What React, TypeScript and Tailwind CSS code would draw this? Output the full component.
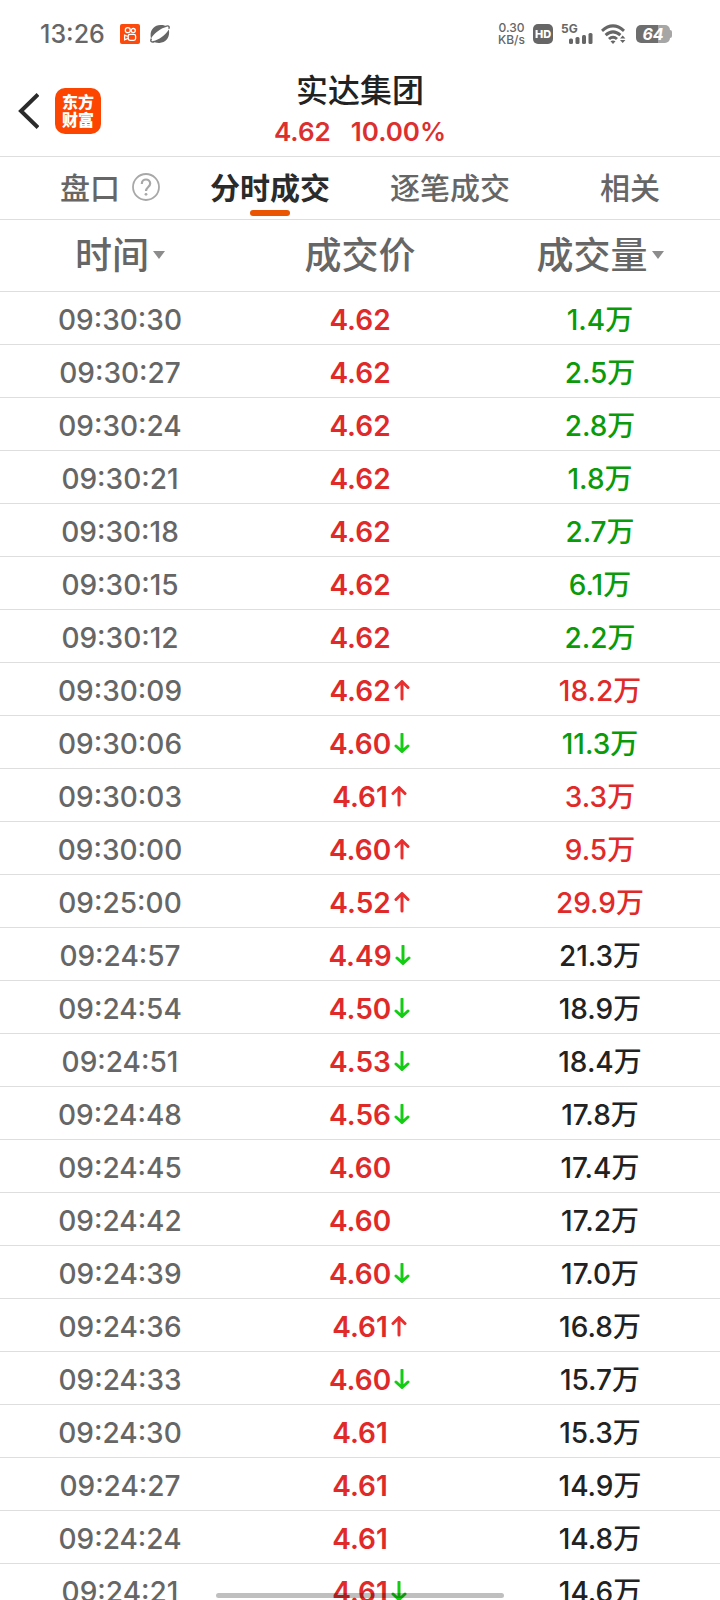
import React, { useState } from 'react';

type Tone = 'up' | 'down' | 'flat';

interface Trade {
  time: string;
  price: string;
  move?: 'up' | 'down';
  volume: string;
  tone: Tone;
}

const trades: Trade[] = [
  { time: '09:30:30', price: '4.62', volume: '1.4万', tone: 'down' },
  { time: '09:30:27', price: '4.62', volume: '2.5万', tone: 'down' },
  { time: '09:30:24', price: '4.62', volume: '2.8万', tone: 'down' },
  { time: '09:30:21', price: '4.62', volume: '1.8万', tone: 'down' },
  { time: '09:30:18', price: '4.62', volume: '2.7万', tone: 'down' },
  { time: '09:30:15', price: '4.62', volume: '6.1万', tone: 'down' },
  { time: '09:30:12', price: '4.62', volume: '2.2万', tone: 'down' },
  { time: '09:30:09', price: '4.62', move: 'up', volume: '18.2万', tone: 'up' },
  { time: '09:30:06', price: '4.60', move: 'down', volume: '11.3万', tone: 'down' },
  { time: '09:30:03', price: '4.61', move: 'up', volume: '3.3万', tone: 'up' },
  { time: '09:30:00', price: '4.60', move: 'up', volume: '9.5万', tone: 'up' },
  { time: '09:25:00', price: '4.52', move: 'up', volume: '29.9万', tone: 'up' },
  { time: '09:24:57', price: '4.49', move: 'down', volume: '21.3万', tone: 'flat' },
  { time: '09:24:54', price: '4.50', move: 'down', volume: '18.9万', tone: 'flat' },
  { time: '09:24:51', price: '4.53', move: 'down', volume: '18.4万', tone: 'flat' },
  { time: '09:24:48', price: '4.56', move: 'down', volume: '17.8万', tone: 'flat' },
  { time: '09:24:45', price: '4.60', volume: '17.4万', tone: 'flat' },
  { time: '09:24:42', price: '4.60', volume: '17.2万', tone: 'flat' },
  { time: '09:24:39', price: '4.60', move: 'down', volume: '17.0万', tone: 'flat' },
  { time: '09:24:36', price: '4.61', move: 'up', volume: '16.8万', tone: 'flat' },
  { time: '09:24:33', price: '4.60', move: 'down', volume: '15.7万', tone: 'flat' },
  { time: '09:24:30', price: '4.61', volume: '15.3万', tone: 'flat' },
  { time: '09:24:27', price: '4.61', volume: '14.9万', tone: 'flat' },
  { time: '09:24:24', price: '4.61', volume: '14.8万', tone: 'flat' },
  { time: '09:24:21', price: '4.61', move: 'down', volume: '14.6万', tone: 'flat' },
];

const tabs = ['盘口', '分时成交', '逐笔成交', '相关'];

const toneClass: Record<Tone, string> = {
  up: 'text-[#e02a2a]',
  down: 'text-[#0a9a0a]',
  flat: 'text-[#222222]',
};

function MoveArrow({ move }: { move: 'up' | 'down' }) {
  return (
    <svg
      viewBox="0 0 16 22"
      className={`absolute left-full top-1/2 ml-[3px] h-[22px] w-4 -translate-y-1/2 ${
        move === 'up' ? 'text-[#e83030]' : 'text-[#14cc14]'
      }`}
      fill="none"
      stroke="currentColor"
      strokeWidth="3"
      strokeLinecap="round"
      strokeLinejoin="round"
      aria-hidden="true"
    >
      {move === 'up' ? <path d="M8 19V1.5M2 7.5L8 1.5L14 7.5" /> : <path d="M8 1V18.5M2 13L8 18.5L14 13" />}
    </svg>
  );
}

function SortCaret() {
  return (
    <svg viewBox="0 0 12 8" className="h-2 w-3 text-[#8c8c8c]" fill="currentColor" aria-hidden="true">
      <path d="M0 0H12L6 8Z" />
    </svg>
  );
}

function StatusBar() {
  return (
    <div className="flex h-16 items-center justify-between pl-10 pr-12 text-[#666666]">
      <div className="flex items-center pt-1">
        <span className="text-[25px] font-medium leading-8">13:26</span>
        <svg viewBox="0 0 20 20" className="ml-[15px] size-5" aria-hidden="true">
          <rect width="20" height="20" rx="2" fill="#fb4a0b" />
          <g fill="none" stroke="#fff" strokeWidth="1.3">
            <circle cx="7.8" cy="6.2" r="2.5" />
            <circle cx="13.2" cy="6.6" r="2.1" />
            <rect x="8.2" y="10.4" width="7.4" height="6" rx="1.8" />
            <path d="M8 12.4L4.6 11.2V15.8L8 14.4" />
          </g>
        </svg>
        <svg viewBox="0 0 20 20" className="ml-[10px] size-5" aria-hidden="true">
          <path d="M1 14.5C-.8 7 3.5 1.4 10.5 1.1C13.5 1 15.3 1.7 16.8 2.8C11 4.300 4.8 8.5 1 14.5Z" fill="currentColor" />
          <path d="M18.8 5.5C20.3 12.5 16.5 18.6 9.5 18.9C6.5 19 4.7 18.3 3.2 17.2C9 15.7 15 11.5 18.8 5.5Z" fill="currentColor" />
          <path d="M15.5 2.3C18 1.3 20 1.9 18.8 4.8M1.4 14.6C-.1 17.5 1.5 18.7 4.5 17.5" fill="none" stroke="currentColor" strokeWidth="1.4" />
        </svg>
      </div>

      <div className="flex items-center pt-1">
        <div className="text-center text-[12px] font-medium leading-3">
          <div>0.30</div>
          <div>KB/s</div>
        </div>
        <div className="ml-2 flex size-5 items-center justify-center rounded-[5px] bg-[#666666] text-[11px] font-extrabold leading-none text-white">
          HD
        </div>
        <div className="relative ml-2 h-5 w-8">
          <span className="absolute left-0 top-0 text-[12px] font-bold leading-[10px]">5G</span>
          <svg viewBox="0 0 24 12" className="absolute bottom-0 right-0 h-3 w-6" fill="currentColor" aria-hidden="true">
            <rect x="0" y="6.5" width="4" height="5.5" rx="1.5" />
            <rect x="6.5" y="5" width="4" height="7" rx="1.5" />
            <rect x="13" y="3" width="4" height="9" rx="1.5" />
            <rect x="19.5" y="1" width="4" height="11" rx="1.5" />
          </svg>
        </div>
        <svg viewBox="0 0 25 20" className="ml-2 h-5 w-[25px]" fill="none" stroke="currentColor" aria-hidden="true">
          <g strokeWidth="3">
            <path d="M1 6.8Q12 -3 23 6.8" />
            <path d="M4.6 11.2Q12 4.6 19.4 11.2" />
            <path d="M8 15Q12 11.4 16 15" />
          </g>
          <path d="M9.5 17.3Q12 15.5 14.5 17.3L12 20Z" fill="currentColor" stroke="none" />
          <path d="M19 14.5L21.7 11.5L24.4 14.5ZM19 16L21.7 19L24.4 16Z" fill="currentColor" stroke="none" />
        </svg>
        <div className="ml-[10px] flex items-center">
          <div className="flex h-[18px] w-[34px] items-center justify-center rounded-[5px] bg-linear-to-r from-[#6e6e6e] from-64% to-[#a6a6a6] to-64% text-[16px] font-bold italic leading-none text-white">
            64
          </div>
          <div className="h-2 w-[2px] rounded-r-sm bg-[#a6a6a6]" />
        </div>
      </div>
    </div>
  );
}

export default function App() {
  const [activeTab, setActiveTab] = useState('分时成交');

  return (
    <div className="flex h-screen flex-col overflow-hidden bg-white font-['Inter','Noto_Sans_CJK_SC',sans-serif] text-[#666666]">
      <StatusBar />

      {/* Stock header */}
      <header className="grid h-[93px] shrink-0 grid-cols-3 items-center border-b border-[#dedede] pt-[2px]">
        <div className="flex items-center gap-4 pl-[18px]">
          <button type="button" aria-label="返回">
            <svg viewBox="0 0 21 36" className="h-9 w-[21px]" fill="none" stroke="#2b2b2b" strokeWidth="4" aria-hidden="true">
              <path d="M20 1.5L3 18L20 34.5" />
            </svg>
          </button>
          <a
            href="#"
            className="flex size-[46px] flex-col items-center justify-center rounded-[10px] bg-[#fd4502] text-[16px] font-black leading-[18px] text-white"
          >
            <span>东方</span>
            <span>财富</span>
          </a>
        </div>
        <div className="text-center">
          <h1 className="text-[32px] font-medium leading-[42px] text-[#222222]">实达集团</h1>
          <div className="flex justify-center gap-5 text-[26px] font-semibold leading-10 text-[#dc3030]">
            <span>4.62</span>
            <span>10.00%</span>
          </div>
        </div>
      </header>

      {/* Tabs */}
      <nav className="grid h-[63px] shrink-0 grid-cols-4 border-b border-[#dedede]">
        {tabs.map((tab) => (
          <button
            key={tab}
            type="button"
            onClick={() => setActiveTab(tab)}
            className={`relative flex items-center justify-center text-[30px] leading-none ${
              tab === activeTab ? 'font-bold text-[#2b2b2b]' : 'font-medium'
            }`}
          >
            <span className="relative">
              {tab}
              {tab === '盘口' && (
                <svg viewBox="0 0 28 28" className="absolute left-full top-0 ml-3 size-7 text-[#a8a8a8]" fill="none" stroke="currentColor" aria-hidden="true">
                  <circle cx="14" cy="14" r="13" strokeWidth="1.8" />
                  <path d="M9.8 11C9.8 5 18.2 5.2 18.2 10.6C18.2 13.8 14 14.2 14 18" strokeWidth="2.2" />
                  <circle cx="14" cy="21.3" r="1.4" fill="currentColor" stroke="none" />
                </svg>
              )}
            </span>
            {tab === activeTab && (
              <span className="absolute bottom-[3px] left-1/2 h-[6px] w-10 -translate-x-1/2 rounded-[3px] bg-[#ea5504]" />
            )}
          </button>
        ))}
      </nav>

      {/* Trades */}
      <div className="min-h-0 flex-1 overflow-hidden">
        <table className="w-full table-fixed border-collapse text-center">
          <thead>
            <tr className="h-[71px] border-b border-[#dedede] text-[37px] leading-none">
              <th className="p-0 font-medium">
                <button type="button" className="inline-flex items-center gap-1">
                  时间
                  <SortCaret />
                </button>
              </th>
              <th className="p-0 font-medium">成交价</th>
              <th className="p-0 font-medium">
                <button type="button" className="inline-flex items-center gap-1">
                  成交量
                  <SortCaret />
                </button>
              </th>
            </tr>
          </thead>
          <tbody>
            {trades.map((trade) => (
              <tr key={trade.time} className="h-[53px] border-b border-[#dedede] text-[28px] font-medium leading-8">
                <td className="p-0 pt-1">{trade.time}</td>
                <td className="p-0 pt-1 font-semibold text-[#e02a2a]">
                  <span className="relative inline-block">
                    {trade.price}
                    {trade.move && <MoveArrow move={trade.move} />}
                  </span>
                </td>
                <td className={`p-0 pt-1 ${toneClass[trade.tone]}`}>{trade.volume}</td>
              </tr>
            ))}
          </tbody>
        </table>
      </div>

      {/* Home gesture bar */}
      <div className="fixed bottom-[2px] left-1/2 h-[5px] w-2/5 -translate-x-1/2 rounded-full bg-black/25" />
    </div>
  );
}
